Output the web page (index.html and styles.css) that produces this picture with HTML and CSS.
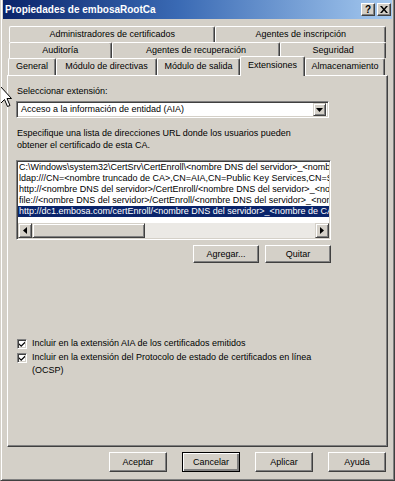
FILE: index.html
```html
<!DOCTYPE html>
<html lang="es">
<head>
<meta charset="utf-8">
<title>Propiedades de embosaRootCa</title>
<link rel="stylesheet" href="styles.css">
</head>
<body>
<div class="dialog">
  <div class="titlebar">
    <span class="title">Propiedades de embosaRootCa</span>
    <div class="tb-buttons">
      <span class="tbtn help">?</span>
      <span class="tbtn close"><svg width="8" height="7" viewBox="0 0 8 7"><path d="M0 0h2l2 2.5L6 0h2L5 3.5 8 7H6L4 4.5 2 7H0l3-3.5z" fill="#000"/></svg></span>
    </div>
  </div>

  <div class="tabs">
    <div class="tabrow back">
      <div class="tab t-admin">Administradores de certificados</div>
      <div class="tab t-insc">Agentes de inscripción</div>
    </div>
    <div class="tabrow back">
      <div class="tab t-aud">Auditoría</div>
      <div class="tab t-recu">Agentes de recuperación</div>
      <div class="tab t-seg">Seguridad</div>
    </div>
    <div class="tabrow front">
      <div class="tab t-gen">General</div>
      <div class="tab t-dir">Módulo de directivas</div>
      <div class="tab t-sal">Módulo de salida</div>
      <div class="tab t-ext selected">Extensiones</div>
      <div class="tab t-alm">Almacenamiento</div>
    </div>
  </div>

  <div class="panel">
    <div class="label">Seleccionar extensión:</div>
    <div class="select">
      <span class="select-text">Acceso a la información de entidad (AIA)</span>
      <span class="select-btn"><svg width="7" height="4" viewBox="0 0 7 4"><path d="M0 0h7L3.5 4z" fill="#000"/></svg></span>
    </div>
    <p class="desc">Especifique una lista de direcciones URL donde los usuarios pueden<br>obtener el certificado de esta CA.</p>

    <div class="listbox">
      <div class="items">
        <div class="item">C:\Windows\system32\CertSrv\CertEnroll\&lt;nombre DNS del servidor&gt;_&lt;nombre truncado de CA&gt;&lt;sufijo de nombre de certificado&gt;.crt</div>
        <div class="item">ldap:///CN=&lt;nombre truncado de CA&gt;,CN=AIA,CN=Public Key Services,CN=Services,&lt;Contenedor de configuración&gt;</div>
        <div class="item">http://&lt;nombre DNS del servidor&gt;/CertEnroll/&lt;nombre DNS del servidor&gt;_&lt;nombre de CA&gt;&lt;sufijo de nombre de certificado&gt;.crt</div>
        <div class="item">file://&lt;nombre DNS del servidor&gt;/CertEnroll/&lt;nombre DNS del servidor&gt;_&lt;nombre de CA&gt;&lt;sufijo de nombre de certificado&gt;.crt</div>
        <div class="item sel">http://dc1.embosa.com/certEnroll/&lt;nombre DNS del servidor&gt;_&lt;nombre de CA&gt;&lt;sufijo de nombre de certificado&gt;.crt</div>
      </div>
      <div class="hscroll">
        <span class="sbtn"><svg width="4" height="7" viewBox="0 0 4 7"><path d="M4 0v7L0 3.5z" fill="#000"/></svg></span>
        <span class="thumb"></span>
        <span class="track"></span>
        <span class="sbtn"><svg width="4" height="7" viewBox="0 0 4 7"><path d="M0 0v7l4-3.5z" fill="#000"/></svg></span>
      </div>
    </div>

    <div class="list-actions">
      <button class="btn wide">Agregar...</button>
      <button class="btn wide">Quitar</button>
    </div>

    <div class="checks">
      <div class="check-row">
        <span class="checkbox"><svg width="7" height="7" viewBox="0 0 7 7"><path d="M0 2.5l2.5 2.5L7 0.5V2.5L2.5 7 0 4.5z" fill="#000"/></svg></span>
        <span class="check-label">Incluir en la extensión AIA de los certificados emitidos</span>
      </div>
      <div class="check-row">
        <span class="checkbox"><svg width="7" height="7" viewBox="0 0 7 7"><path d="M0 2.5l2.5 2.5L7 0.5V2.5L2.5 7 0 4.5z" fill="#000"/></svg></span>
        <span class="check-label">Incluir en la extensión del Protocolo de estado de certificados en línea<br>(OCSP)</span>
      </div>
    </div>
  </div>

  <div class="footer">
    <button class="btn">Aceptar</button>
    <button class="btn default">Cancelar</button>
    <button class="btn">Aplicar</button>
    <button class="btn">Ayuda</button>
  </div>

  <svg class="cursor" width="12" height="22" viewBox="0 0 12 22"><path d="M0.5 0.5V17.5L4.5 13.5L7.5 20.5L10 19.5L7 12.5H11.5Z" fill="#fff" stroke="#000" stroke-width="1"/></svg>
</div>
</body>
</html>
```

FILE: styles.css
```css
html, body {
  margin: 0;
  padding: 0;
  background: #d4d0c8;
}

body {
  font-family: "Liberation Sans", Arial, sans-serif;
  font-size: 9px;
  color: #000;
}

.dialog {
  position: relative;
  width: 395px;
  height: 481px;
  box-sizing: border-box;
  border: 1px solid;
  border-top: none;
  border-color: #d4d0c8 #404040 #404040 #d4d0c8;
  box-shadow: inset 1px 0 #fff, inset -1px -1px #808080;
  padding: 0 2px 2px 2px;
  display: flex;
  flex-direction: column;
  overflow: hidden;
}

.titlebar {
  height: 19px;
  background: linear-gradient(to right, #0a246a 0%, #3a6ab4 45%, #a6caf0 100%);
  display: flex;
  align-items: center;
  justify-content: space-between;
  padding: 0 1px 0 2px;
}

.title {
  color: #fff;
  font-weight: bold;
  font-size: 10px;
}

.tb-buttons {
  display: flex;
  gap: 2px;
}

.tbtn {
  width: 14px;
  height: 13px;
  box-sizing: border-box;
  background: #d4d0c8;
  border: 1px solid;
  border-color: #fff #404040 #404040 #fff;
  box-shadow: inset -1px -1px #808080;
  display: flex;
  align-items: center;
  justify-content: center;
  font-weight: bold;
  font-size: 10px;
  line-height: 1;
}

.tabs {
  margin: 7px 4px 0 4px;
}

.tabrow {
  display: flex;
  height: 16px;
}

.tabrow.back {
  margin: 0 2px;
}

.tabrow.front {
  margin-left: 1px;
  height: 17px;
}

.tab {
  box-sizing: border-box;
  height: 100%;
  border-top: 1px solid #fff;
  border-left: 1px solid #fff;
  border-right: 1px solid #404040;
  border-radius: 2px 2px 0 0;
  box-shadow: inset -1px 0 #808080;
  background: #d4d0c8;
  text-align: center;
  line-height: 14px;
  white-space: nowrap;
  overflow: hidden;
}

.t-admin { width: 207px; }
.t-insc { width: 171px; }
.t-aud { width: 103px; }
.t-recu { width: 169px; }
.t-seg { width: 106px; }
.t-gen { width: 48px; }
.t-dir { width: 101px; }
.t-sal { width: 83px; }
.t-ext { width: 65px; }
.t-alm { width: 80px; }

.tab.selected {
  position: relative;
  z-index: 1;
  height: 20px;
  margin-top: -2px;
  line-height: 16px;
}

.panel {
  flex: 1;
  box-sizing: border-box;
  border: 1px solid;
  border-color: #fff #404040 #404040 #fff;
  box-shadow: inset -1px -1px #808080;
  margin: 0 4px;
  padding: 10px 8px 0 8px;
  display: flex;
  flex-direction: column;
  align-items: flex-start;
}

.label {
  line-height: 11px;
  padding-left: 1px;
}

.select {
  margin-top: 4px;
  width: 313px;
  height: 17px;
  box-sizing: border-box;
  border: 1px solid;
  border-color: #808080 #fff #fff #808080;
  box-shadow: inset 1px 1px #404040, inset -1px -1px #d4d0c8;
  background: #fff;
  display: flex;
  align-items: center;
  padding: 2px;
}

.select-text {
  flex: 1;
  padding-left: 2px;
  line-height: 11px;
}

.select-btn,
.sbtn {
  box-sizing: border-box;
  background: #d4d0c8;
  border: 1px solid;
  border-color: #d4d0c8 #404040 #404040 #d4d0c8;
  box-shadow: inset 1px 1px #fff, inset -1px -1px #808080;
  display: flex;
  align-items: center;
  justify-content: center;
}

.select-btn {
  width: 13px;
  height: 13px;
}

.desc {
  margin: 9px 0 0 0;
  line-height: 12px;
  padding-left: 1px;
}

.listbox {
  margin-top: 9px;
  width: 315px;
  height: 80px;
  box-sizing: border-box;
  border: 1px solid;
  border-color: #808080 #fff #fff #808080;
  box-shadow: inset 1px 1px #404040, inset -1px -1px #d4d0c8;
  padding: 1px;
  background: #fff;
  display: flex;
  flex-direction: column;
}

.items {
  flex: 1;
  overflow: hidden;
  padding-top: 0;
}

.item {
  line-height: 11px;
  white-space: nowrap;
  overflow: hidden;
  padding-left: 1px;
}

.item.sel {
  background: #0a246a;
  color: #fff;
}

.hscroll {
  height: 15px;
  display: flex;
}

.sbtn {
  width: 14px;
  height: 15px;
}

.thumb {
  width: 113px;
  box-sizing: border-box;
  background: #d4d0c8;
  border: 1px solid;
  border-color: #d4d0c8 #404040 #404040 #d4d0c8;
  box-shadow: inset 1px 1px #fff, inset -1px -1px #808080;
}

.track {
  flex: 1;
  background: #ebe9e5;
}

.list-actions {
  margin-top: 5px;
  width: 315px;
  display: flex;
  justify-content: flex-end;
  gap: 6px;
}

.btn {
  font-family: inherit;
  font-size: 9px;
  color: #000;
  width: 58px;
  height: 20px;
  padding: 0;
  margin: 0;
  box-sizing: border-box;
  background: #d4d0c8;
  border: 1px solid;
  border-color: #fff #404040 #404040 #fff;
  box-shadow: inset -1px -1px #808080;
  border-radius: 0;
}

.btn.wide {
  width: 66px;
  height: 18px;
}

.btn.default {
  border-color: #000;
  box-shadow: inset 1px 1px #fff, inset -2px -2px #808080;
}

.checks {
  margin-top: 74px;
  display: flex;
  flex-direction: column;
}

.check-row {
  display: flex;
  align-items: flex-start;
  gap: 5px;
  line-height: 13.5px;
  padding-left: 1px;
}

.checkbox {
  margin-top: 2px;
  width: 10px;
  height: 10px;
  box-sizing: border-box;
  border: 1px solid;
  border-color: #808080 #fff #fff #808080;
  box-shadow: inset 1px 1px #404040, inset -1px -1px #d4d0c8;
  background: #fff;
  display: flex;
  align-items: center;
  justify-content: center;
}

.checkbox svg {
  width: 6px;
  height: 6px;
}

.footer {
  margin: 5px 4px 6px 4px;
  padding-right: 2px;
  display: flex;
  justify-content: flex-end;
  gap: 15px;
}

.cursor {
  position: absolute;
  left: -1px;
  top: 86px;
  z-index: 5;
}
```
